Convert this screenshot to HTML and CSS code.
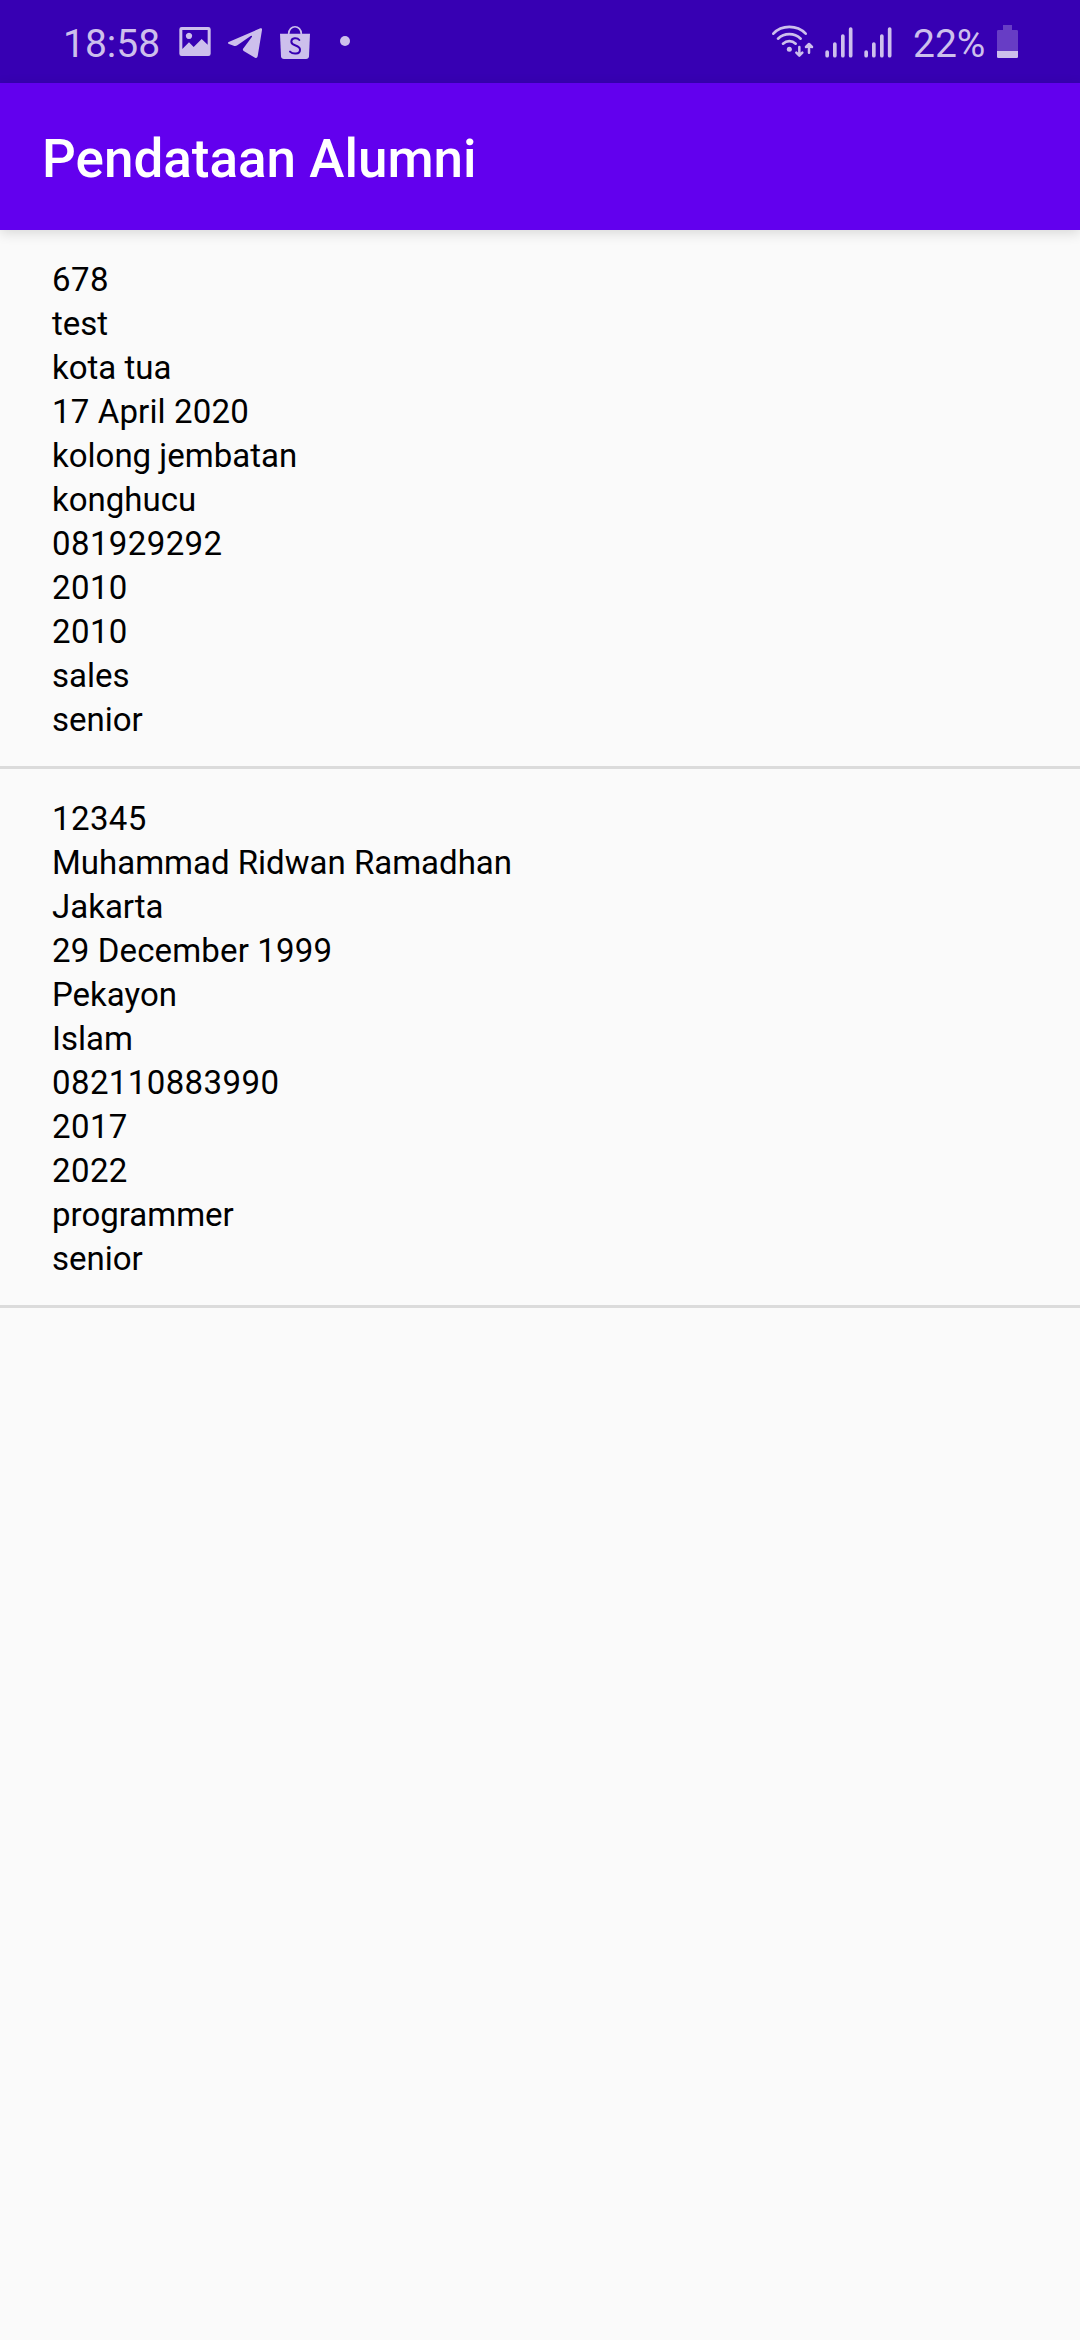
FILE: index.html
```html
<!DOCTYPE html>
<html lang="id">
<head>
<meta charset="utf-8">
<title>Pendataan Alumni</title>
<link rel="stylesheet" href="styles.css">
</head>
<body>
<div class="status-bar">
  <div class="status-left">
    <span class="clock">18:58</span>
    <svg class="icon" width="36" height="83" viewBox="411 0 108 249"><path fill-rule="evenodd" d="M425 81H505Q512 81 512 88V161Q512 168 505 168H425Q418 168 418 161V88Q418 81 425 81ZM427 90V147L447 127L461 141L485 117L503 134V90ZM447 98A9.500 9.500 0 1 1 446.900 98Z"/></svg>
    <svg class="icon" width="40" height="83" viewBox="555 0 120 249"><path d="M566 126L661 85Q667 83 666 90L653 169Q651 176 645 173L611 153Q606 149 611 144L636 110Q637 106 632 108L592 136Q587 139 581 137L567 132Q561 129 566 126Z"/></svg>
    <svg class="icon" width="40" height="83" viewBox="705 0 120 249"><path d="M720 101H810L807 169Q806 177 798 177H732Q724 177 723 169Z"/><path class="line" stroke-width="5" d="M746 102C746 73 784 73 784 102"/><path class="cut" d="M778 120C772 112 754 112 754 125C754 139 780 134 780 149C780 164 758 163 750 155"/></svg>
    <span class="dot"></span>
  </div>
  <div class="status-right">
    <svg class="icon" width="46" height="83" viewBox="60 0 138 249"><path class="line" stroke-width="8" d="M70 101C95 74 141 74 167 101M84 116C103 98 133 98 152 116M99 131C110 121 126 121 137 131"/><circle cx="118" cy="148" r="7.500"/><path class="line" stroke-width="7.500" d="M148 141V166M139 158L148 167L157 158M177 158V134M168 141L177 132L186 141"/></svg>
    <svg class="icon" width="30" height="83" viewBox="221 0 90 249"><path class="line" stroke-width="11" d="M230.500 156V167M253.500 132V167M277.500 108V167M301 87V167"/></svg>
    <svg class="icon" width="30" height="83" viewBox="221 0 90 249"><path class="line" stroke-width="11" d="M230.500 156V167M253.500 132V167M277.500 108V167M301 87V167"/></svg>
    <span class="percent">22%</span>
    <svg class="icon" width="23" height="83" viewBox="738 0 69 249"><path opacity=".32" d="M759 75H786V90H800Q804 90 804 94V153H741V94Q741 90 745 90H759Z"/><path d="M741 153H804V170Q804 174 800 174H745Q741 174 741 170Z"/></svg>
  </div>
</div>
<header class="app-bar"><h1>Pendataan Alumni</h1></header>
<main>
  <ul class="alumni">
    <li class="number">678</li><li>test</li><li>kota tua</li><li class="date">17 April 2020</li><li>kolong jembatan</li><li>konghucu</li><li class="number">081929292</li><li class="number">2010</li><li class="number">2010</li><li>sales</li><li>senior</li>
  </ul>
  <ul class="alumni">
    <li class="number">12345</li><li>Muhammad Ridwan Ramadhan</li><li>Jakarta</li><li class="date">29 December 1999</li><li>Pekayon</li><li>Islam</li><li class="number">082110883990</li><li class="number">2017</li><li class="number">2022</li><li>programmer</li><li>senior</li>
  </ul>
</main>
</body>
</html>
```
FILE: styles.css
```css
* { box-sizing: border-box; }
body {
  margin: 0;
  min-height: 2340px;
  background: #fafafa;
  color: #000;
  font-family: Roboto, sans-serif;
}
.status-bar {
  display: flex;
  justify-content: space-between;
  height: 83px;
  padding: 0 61px 0 63px;
  background: #3700b3;
  color: #cdbfec;
  font-size: 39px;
  line-height: 88px;
}
.status-left, .status-right { display: flex; height: 83px; }
.icon { display: block; flex: none; fill: currentColor; }
.line { fill: none; stroke: currentColor; stroke-linecap: round; stroke-linejoin: round; }
.cut { fill: none; stroke: #3700b3; stroke-width: 6; stroke-linecap: round; }
.clock { width: 114px; }
.status-left .icon + .icon { margin-left: 12px; }
.status-left .icon:nth-of-type(3) { margin-left: 10px; }
.dot {
  width: 10px;
  height: 10px;
  margin: 36px 0 0 25px;
  border-radius: 50%;
  background: currentColor;
}
.status-right .icon:nth-of-type(2) { margin-left: 8px; }
.status-right .icon:nth-of-type(3) { margin-left: 9px; }
.percent { width: 103px; padding-left: 20px; }
.app-bar {
  position: relative;
  display: flex;
  align-items: center;
  height: 147px;
  padding: 4px 42px 0;
  background: #6200ee;
  color: #fff;
  box-shadow: 0 3px 12px rgba(0, 0, 0, .14);
}
.app-bar h1 { margin: 0; font-size: 53px; font-weight: 500; line-height: 62px; }
.alumni {
  height: 539px;
  margin: 0;
  padding: 28px 52px 0;
  border-bottom: 3px solid #dbdbdb;
  list-style: none;
  font-size: 33px;
  line-height: 44px;
}
.alumni .number { letter-spacing: .4px; }
.alumni .date { letter-spacing: .15px; }
```
